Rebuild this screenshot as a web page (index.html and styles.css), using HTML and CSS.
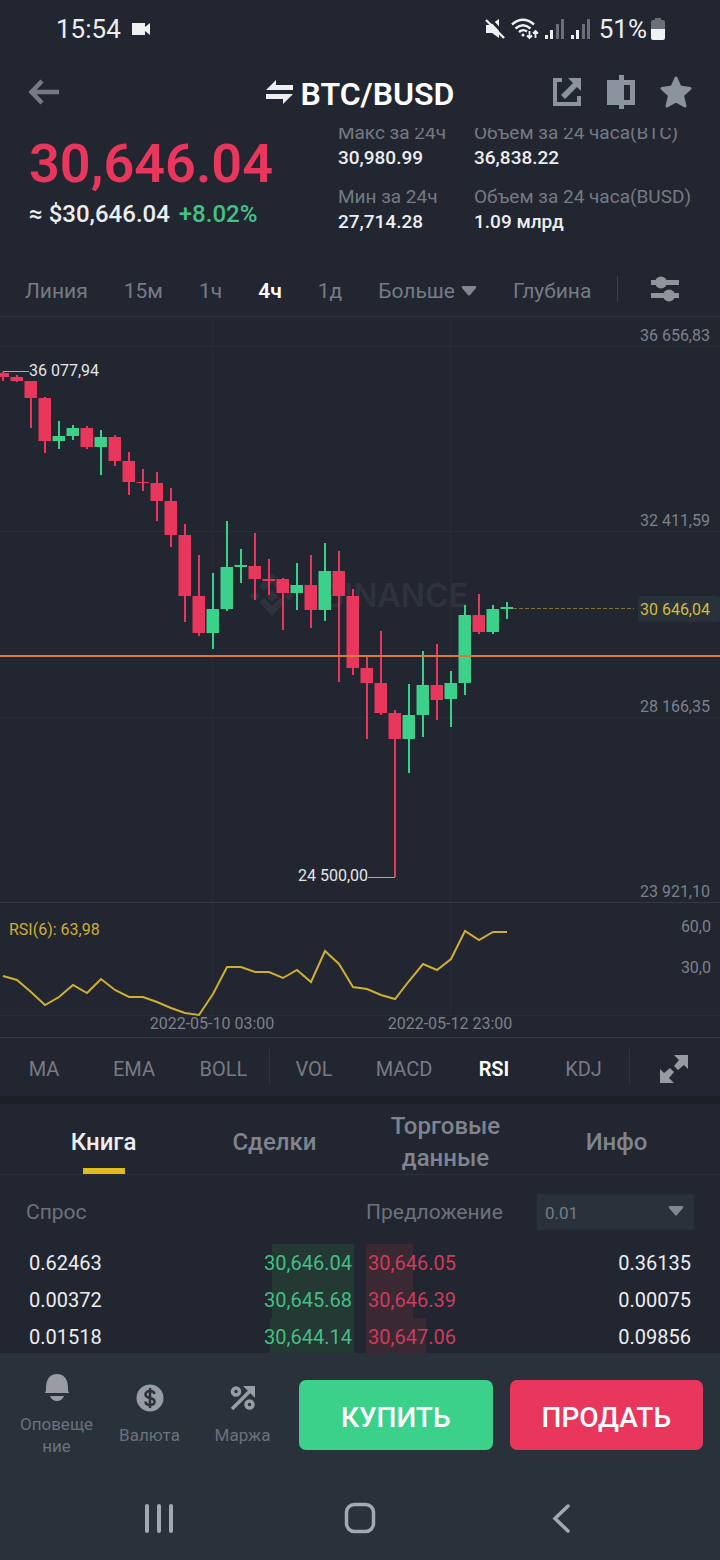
FILE: index.html
```html
<!DOCTYPE html>
<html lang="ru">
<head>
    <meta charset="UTF-8">
    <meta name="viewport" content="width=device-width, initial-scale=1.0">
    <title>BTC/BUSD</title>
    <link rel="stylesheet" href="styles.css">
</head>
<body>
    <div class="screen">
        <div class="status-bar">
            <div class="status-group">
                <span>15:54</span>
                <svg class="status-camera" width="20" height="14" viewBox="0 0 20 14" fill="#eef0f2"><path d="M1 1h13v4l5-4v12l-5-4v4H1z"/></svg>
            </div>
            <div class="status-group">
                <svg width="20" height="22" viewBox="0 0 20 22"><path fill="#eef0f2" d="M1 7h4l9-6v19l-7-5H1z"/><path stroke="#222630" stroke-width="3" d="M4 0l16 17"/><path stroke="#eef0f2" stroke-width="2.4" d="M1 2l18 18"/></svg>
                <svg width="28" height="22" viewBox="0 0 28 22" fill="none" stroke="#eef0f2" stroke-width="2.4"><path d="M1 6.500Q12 -3 23 6.500M4.500 10.500Q12 4 19.500 10.500M8 14Q12 10.500 16 13.500"/><circle cx="12" cy="17" r="1.500" fill="#eef0f2" stroke="none"/><path stroke-width="1.800" d="M18.500 13v7M16 17.500l2.500 2.500 2.500-2.500M24.500 20v-7M22 15.500l2.500-2.500 2.500 2.500"/></svg>
                <svg width="20" height="22" viewBox="0 0 20 22"><path fill="#eef0f2" d="M0 17h3v4H0zM5 12h3v9H5z"/><path fill="#6b6f77" d="M11 6h3v15h-3zM16 1h3v20h-3z"/></svg>
                <svg width="20" height="22" viewBox="0 0 20 22"><path fill="#eef0f2" d="M0 17h3v4H0zM5 12h3v9H5z"/><path fill="#6b6f77" d="M11 6h3v15h-3zM16 1h3v20h-3z"/></svg>
                <span class="battery">51%</span>
                <svg width="16" height="22" viewBox="0 0 16 22"><path fill="#6b6f77" d="M5 0h6v2h2q2 0 2 2v8H1V4q0-2 2-2h2z"/><path fill="#f0f1f4" d="M1 11h14v9q0 2-2 2H3q-2 0-2-2z"/></svg>
            </div>
        </div>

        <header class="header">
            <button class="icon-button" aria-label="Назад">
                <svg width="32" height="26" viewBox="0 0 32 26" fill="none" stroke="#757a85" stroke-width="4.500"><path d="M14 2L3.500 13 14 24M4 13h27"/></svg>
            </button>
            <h1 class="pair">
                <svg width="28" height="26" viewBox="0 0 28 26" fill="#eceef2"><path d="M0 11L10 1v5h17v5zM27 15L17 25v-5H0v-5z"/></svg>
                <span>BTC/BUSD</span>
            </h1>
            <div class="header-actions">
                <button class="icon-button" aria-label="Поделиться">
                    <svg width="30" height="30" viewBox="0 0 30 30"><path fill="none" stroke="#8a939e" stroke-width="4" d="M10 3H3v24h24v-8"/><path fill="#8a939e" d="M16 1h13v13l-4-4-12 12-4-4L21 6z"/></svg>
                </button>
                <button class="icon-button" aria-label="Сравнить">
                    <svg width="30" height="34" viewBox="0 0 30 34"><path fill="#8a939e" fill-rule="evenodd" d="M1 5h12V0h5v5h11v25H18v4h-5v-4H1zM18 10v15h6V10z"/></svg>
                </button>
                <button class="icon-button" aria-label="В избранное">
                    <svg width="32" height="32" viewBox="0 0 32 32"><path fill="#8a939e" stroke="#8a939e" stroke-width="3" stroke-linejoin="round" d="M16 2l4 9 10 1.500-7.500 7L25 30l-9-5-9 5 2.500-10.500L2 12.500 12 11z"/></svg>
                </button>
            </div>
        </header>

        <main class="content">
            <section class="summary">
                <div class="price-block">
                    <div class="price">30,646.04</div>
                    <div class="price-usd">≈ $30,646.04 <span class="up">+8.02%</span></div>
                </div>
                <dl class="stats">
                    <div><dt>Макс за 24ч</dt><dd>30,980.99</dd></div>
                    <div><dt>Объем за 24 часа(BTC)</dt><dd>36,838.22</dd></div>
                    <div><dt>Мин за 24ч</dt><dd>27,714.28</dd></div>
                    <div><dt>Объем за 24 часа(BUSD)</dt><dd>1.09 млрд</dd></div>
                </dl>
            </section>

            <nav class="intervals">
                <button>Линия</button>
                <button>15м</button>
                <button>1ч</button>
                <button class="active">4ч</button>
                <button>1д</button>
                <button class="more">Больше <svg width="16" height="10" viewBox="0 0 16 10"><path fill="#81868f" d="M2 0h12q2 0 1 2L9 9q-1 1-2 0L1 2q-1-2 1-2z"/></svg></button>
                <button>Глубина</button>
                <button class="settings" aria-label="Настройки">
                    <svg width="28" height="26" viewBox="0 0 28 26" fill="#8f949d"><path d="M0 4h28v5H0zM0 17h28v5H0z"/><circle cx="10" cy="6.500" r="6"/><circle cx="18" cy="19.500" r="6"/></svg>
                </button>
            </nav>

            <svg class="chart" id="chart" viewBox="0 0 720 720">
                <path class="grid" d="M0 29.500h720M0 214.500h720M0 400.500h720M0 698.500h720M212.500 0v698M450.500 0v698"/>
                <path class="border" d="M0 585.500h720"/>
                <g class="watermark">
                    <path d="M272 256l13 13-5 5-8-8-8 8-5-5zM272 273l6 6-6 6-6-6zM255 274l5 5-5 5-5-5zM289 274l5 5-5 5-5-5zM259 285l5-4 8 8 8-8 5 4-13 14z"/>
                    <text x="468" y="290">BINANCE</text>
                </g>
                <g id="candles"></g>
                <path class="level" d="M0 339h720"/>
                <path class="last-line" d="M513 291.500h121"/>
                <path class="marker" d="M3 54.500h26M368 560.500h27"/>
                <text class="marker-text" x="29" y="59">36 077,94</text>
                <text class="marker-text" x="298" y="564">24 500,00</text>
                <g class="axis">
                    <text x="710" y="24">36 656,83</text>
                    <text x="710" y="209">32 411,59</text>
                    <text x="710" y="395">28 166,35</text>
                    <text x="710" y="580">23 921,10</text>
                    <text x="711" y="615">60,0</text>
                    <text x="711" y="656">30,0</text>
                </g>
                <rect class="last-tag" x="638" y="279" width="82" height="26" rx="3"/>
                <text class="last-price" x="710" y="298">30 646,04</text>
                <polyline id="rsi" class="rsi-line"/>
                <text class="rsi-text" x="9" y="618">RSI(6): 63,98</text>
                <g class="dates">
                    <text x="212" y="712">2022-05-10 03:00</text>
                    <text x="450" y="712">2022-05-12 23:00</text>
                </g>
            </svg>

            <nav class="indicators">
                <button>MA</button>
                <button>EMA</button>
                <button class="divided">BOLL</button>
                <button>VOL</button>
                <button>MACD</button>
                <button class="active">RSI</button>
                <button class="divided">KDJ</button>
                <button aria-label="На весь экран">
                    <svg width="28" height="28" viewBox="0 0 28 28" fill="#969ba3"><path d="M14 0h14v14l-4-4-6 5-4-4 5-6zM14 28H0V14l4 4 6-5 4 4-5 6z"/></svg>
                </button>
            </nav>

            <nav class="tabs">
                <button class="active">Книга</button>
                <button>Сделки</button>
                <button>Торговые данные</button>
                <button>Инфо</button>
            </nav>

            <section class="book">
                <table>
                    <thead>
                        <tr>
                            <th colspan="2">Спрос</th>
                            <th class="ask-head">Предложение</th>
                            <th>
                                <div class="step">
                                    <select aria-label="Шаг цены"><option>0.01</option></select>
                                    <svg width="16" height="12" viewBox="0 0 16 12"><path fill="#81868f" d="M2 1h12q2 0 1 2L9 10q-1 1-2 0L1 3q-1-2 1-2z"/></svg>
                                </div>
                            </th>
                        </tr>
                    </thead>
                    <tbody>
                        <tr>
                            <td class="amount">0.62463</td>
                            <td class="bid"><div style="--depth: 51%">30,646.04</div></td>
                            <td class="ask"><div style="--depth: 29%">30,646.05</div></td>
                            <td class="amount right">0.36135</td>
                        </tr>
                        <tr>
                            <td class="amount">0.00372</td>
                            <td class="bid"><div style="--depth: 51%">30,645.68</div></td>
                            <td class="ask"><div style="--depth: 29%">30,646.39</div></td>
                            <td class="amount right">0.00075</td>
                        </tr>
                        <tr>
                            <td class="amount">0.01518</td>
                            <td class="bid"><div style="--depth: 52%">30,644.14</div></td>
                            <td class="ask"><div style="--depth: 37%">30,647.06</div></td>
                            <td class="amount right">0.09856</td>
                        </tr>
                    </tbody>
                </table>
            </section>
        </main>

        <footer class="footer">
            <div class="actions">
                <button class="tool">
                    <svg width="28" height="28" viewBox="0 0 28 28" fill="#979ca5"><path d="M3 15C3 5 8 1 14 1s11 4 11 14v3q1 1 1 2H2q0-1 1-2zM7 23h14q-2 5-7 5t-7-5z"/></svg>
                    <span>Оповеще<br>ние</span>
                </button>
                <button class="tool">
                    <svg width="28" height="28" viewBox="0 0 28 28"><circle cx="14" cy="14" r="13.500" fill="#979ca5"/><path fill="none" stroke="#29313a" stroke-width="2.500" d="M14 4v20M18.500 10Q18 7 14 7t-4.500 3.500Q9.500 13 14 14t4.500 3.500Q18.500 21 14 21t-4.500-3.500"/></svg>
                    <span>Валюта</span>
                </button>
                <button class="tool">
                    <svg width="28" height="28" viewBox="0 0 28 28" fill="none" stroke="#979ca5" stroke-width="3.500"><circle cx="7" cy="7.500" r="3.500"/><circle cx="20.500" cy="20.500" r="3.500"/><path d="M3 25L22 6"/><path fill="#979ca5" stroke="none" d="M14 2h12v12z"/></svg>
                    <span>Маржа</span>
                </button>
                <button class="trade buy">КУПИТЬ</button>
                <button class="trade sell">ПРОДАТЬ</button>
            </div>
            <nav class="system-nav">
                <button aria-label="Недавние"><svg width="30" height="30" viewBox="0 0 30 30" stroke="#a3a9b3" stroke-width="4" stroke-linecap="round"><path d="M3 3v25M15 3v25M27 3v25"/></svg></button>
                <button aria-label="Домой"><svg width="32" height="32" viewBox="0 0 32 32"><rect x="2.500" y="2.500" width="27" height="27" rx="8" fill="none" stroke="#a3a9b3" stroke-width="3.500"/></svg></button>
                <button aria-label="Назад"><svg width="20" height="30" viewBox="0 0 20 30" fill="none" stroke="#a3a9b3" stroke-width="3.500" stroke-linecap="round"><path d="M17 3L4 15.500 17 28"/></svg></button>
            </nav>
        </footer>
    </div>

    <script src="chart.js"></script>
</body>
</html>
```

FILE: styles.css
```css
* {
    box-sizing: border-box;
}

body {
    margin: 0;
    background-color: #222630;
    color: #eceef2;
    font-family: Roboto, "Noto Sans", sans-serif;
    font-size: 20px;
}

button {
    padding: 0;
    border: none;
    background: none;
    color: #767b85;
    font-family: inherit;
    font-size: 20px;
    cursor: pointer;
}

svg {
    display: block;
    flex-shrink: 0;
}

.screen {
    display: flex;
    flex-direction: column;
    height: 100vh;
}

/* status bar */
.status-bar {
    display: flex;
    justify-content: space-between;
    align-items: center;
    height: 56px;
    padding: 2px 54px 0 56px;
    font-size: 26px;
}

.status-group {
    display: flex;
    align-items: center;
    gap: 6px;
}

.status-camera {
    margin-left: 4px;
}

.battery {
    margin: 0 -3px 0 2px;
}

/* header */
.header {
    display: grid;
    grid-template-columns: 1fr auto 1fr;
    align-items: center;
    height: 72px;
    padding: 0 28px;
}

.icon-button {
    justify-self: start;
}

.pair {
    display: flex;
    align-items: center;
    gap: 7px;
    margin: 0;
    color: #fff;
    font-size: 32px;
    font-weight: 600;
    line-height: 40px;
}

.pair span {
    padding-top: 4px;
}

.header-actions {
    display: flex;
    justify-content: flex-end;
    align-items: center;
    gap: 24px;
}

.content {
    flex: 1;
    min-height: 0;
    overflow-y: auto;
    scrollbar-width: none;
}

/* price and 24h stats */
.summary {
    display: flex;
    justify-content: space-between;
    height: 134px;
    padding: 0 29px;
    overflow: hidden;
}

.price {
    margin-top: 4px;
    color: #e8365d;
    font-size: 54px;
    font-weight: 600;
    line-height: 64px;
}

.price-usd {
    font-size: 24px;
    font-weight: 500;
    line-height: 36px;
}

.up {
    margin-left: 3px;
    color: #41c287;
}

.stats {
    display: grid;
    grid-template-columns: auto auto;
    align-content: start;
    gap: 14px 28px;
    margin: -7px 0 0;
}

.stats dt {
    color: #747a84;
    font-size: 19px;
    line-height: 24px;
}

.stats dd {
    margin: 0;
    font-size: 19px;
    font-weight: 500;
    line-height: 26px;
}

/* chart intervals */
.intervals {
    display: flex;
    align-items: center;
    gap: 36px;
    height: 55px;
    padding: 0 25px;
    border-bottom: 1px solid #2f343e;
}

.intervals button {
    padding-top: 3px;
    font-size: 21px;
}

.intervals .more {
    display: flex;
    align-items: center;
    gap: 6px;
}

.intervals .active,
.indicators .active {
    color: #fff;
    font-weight: 600;
}

.intervals .settings {
    margin-left: -10px;
    padding: 0 0 0 33px;
    border-left: 1px solid #3a3f49;
}

/* chart */
.chart {
    width: 100%;
    height: auto;
    font-size: 16px;
}

.grid {
    stroke: #272c36;
}

.border {
    stroke: #343943;
}

.watermark {
    fill: #2d323c;
    font-family: Inter, sans-serif;
    font-size: 32px;
    font-weight: 600;
    text-anchor: end;
}

.wick {
    stroke-width: 2;
}

.candle-up {
    fill: #3bd18a;
    stroke: #3bd18a;
}

.candle-down {
    fill: #e8365d;
    stroke: #e8365d;
}

.body {
    stroke: none;
}

.level {
    stroke: #d87a3e;
    stroke-width: 2;
}

.last-line {
    stroke: #80723b;
    stroke-dasharray: 4 2;
}

.marker {
    stroke: #a5a9b0;
}

.marker-text {
    fill: #e3e5e9;
}

.axis {
    fill: #7c818a;
    text-anchor: end;
}

.last-tag {
    fill: #29323b;
}

.last-price {
    fill: #d6ba3c;
    text-anchor: end;
}

.rsi-line {
    fill: none;
    stroke: #cfae34;
    stroke-width: 2;
}

.rsi-text {
    fill: #cfae34;
}

.dates {
    fill: #7c818a;
    text-anchor: middle;
}

/* indicators */
.indicators {
    display: grid;
    grid-template-columns: repeat(8, 1fr);
    align-items: center;
    height: 67px;
    border-top: 1px solid #343943;
    border-bottom: 8px solid #1c2026;
}

.indicators button {
    display: flex;
    justify-content: center;
    align-items: center;
    height: 36px;
    padding: 3px 2px 0 0;
}

.indicators .divided {
    border-right: 1px solid #2f343e;
}

/* tabs */
.tabs {
    display: grid;
    grid-template-columns: repeat(4, 1fr);
    height: 71px;
    padding: 0 18px;
    border-bottom: 1px solid #2b3039;
}

.tabs button {
    position: relative;
    padding: 5px 20px 0;
    color: #7f848e;
    font-size: 24px;
    font-weight: 500;
    line-height: 32px;
}

.tabs .active {
    color: #eceef2;
}

.tabs .active::after {
    content: "";
    position: absolute;
    left: 50%;
    bottom: 0;
    width: 42px;
    height: 6px;
    margin-left: -21px;
    background-color: #dfbc20;
}

/* order book */
.book {
    padding: 5px 26px 0;
}

.book table {
    width: 100%;
    table-layout: fixed;
    border-collapse: collapse;
}

.book th {
    height: 64px;
    padding: 0;
    color: #6c727c;
    font-size: 21px;
    font-weight: 400;
    text-align: left;
}

.book .ask-head {
    padding-left: 6px;
}

.step {
    position: relative;
    margin-left: 10px;
}

.step select {
    display: block;
    width: 100%;
    height: 36px;
    padding: 2px 8px 0;
    border: none;
    border-radius: 3px;
    background-color: #29323b;
    color: #767b85;
    font-family: inherit;
    font-size: 17px;
    appearance: none;
}

.step svg {
    position: absolute;
    top: 11px;
    right: 10px;
    pointer-events: none;
}

.book td {
    height: 37px;
    padding: 0;
    line-height: 37px;
}

.book .amount {
    padding: 2px 3px 0;
    line-height: 35px;
}

.book .right {
    text-align: right;
}

.book .bid {
    padding-right: 6px;
    color: #44be86;
    text-align: right;
}

.book .ask {
    padding-left: 6px;
    color: #cd3b5d;
}

.book td div {
    padding: 2px 2px 0;
    line-height: 35px;
}

.book .bid div {
    background: linear-gradient(to left, #243834 var(--depth), transparent var(--depth));
}

.book .ask div {
    background: linear-gradient(to right, #3a2833 var(--depth), transparent var(--depth));
}

/* bottom bar */
.footer {
    background-color: #29313a;
}

.actions {
    display: flex;
    align-items: center;
    height: 123px;
    padding: 0 17px 0 10px;
}

.tool {
    display: flex;
    flex-direction: column;
    align-items: center;
    gap: 12px;
    width: 93px;
    color: #6a727c;
    font-size: 17px;
    line-height: 22px;
}

.trade {
    flex: 1;
    height: 70px;
    margin-left: 17px;
    padding-top: 5px;
    border-radius: 7px;
    color: #fff;
    font-size: 28px;
    font-weight: 500;
}

.buy {
    margin-left: 10px;
    background-color: #3bd18a;
}

.sell {
    background-color: #e8365d;
}

.system-nav {
    display: grid;
    grid-template-columns: repeat(3, 1fr);
    height: 84px;
    padding: 0 58px;
}

.system-nav button {
    display: flex;
    justify-content: center;
    align-items: center;
}
```

FILE: chart.js
```js
// [direction, high, body top, body bottom, low]
const candles = [
    ['down', 55, 56, 60, 64],
    ['down', 58, 60, 64, 65],
    ['down', 64, 64, 81, 111],
    ['down', 80, 81, 124, 136],
    ['up', 104, 119, 124, 132],
    ['up', 108, 111, 119, 123],
    ['down', 109, 111, 130, 132],
    ['up', 113, 120, 130, 158],
    ['down', 118, 120, 144, 149],
    ['down', 135, 144, 165, 178],
    ['down', 152, 165, 166, 174],
    ['down', 155, 166, 184, 204],
    ['down', 171, 184, 218, 230],
    ['down', 207, 218, 279, 305],
    ['down', 238, 279, 316, 319],
    ['up', 256, 292, 316, 332],
    ['up', 204, 250, 292, 294],
    ['up', 232, 248, 250, 266],
    ['down', 216, 249, 262, 283],
    ['down', 242, 262, 264, 278],
    ['down', 261, 262, 276, 313],
    ['up', 246, 268, 276, 293],
    ['down', 238, 268, 293, 311],
    ['up', 226, 254, 293, 304],
    ['down', 234, 254, 279, 365],
    ['down', 272, 279, 351, 358],
    ['down', 339, 351, 366, 422],
    ['down', 314, 366, 396, 398],
    ['down', 393, 396, 422, 560],
    ['up', 367, 398, 422, 456],
    ['up', 334, 368, 398, 420],
    ['down', 327, 368, 383, 403],
    ['up', 354, 366, 382, 410],
    ['up', 288, 298, 366, 378],
    ['down', 277, 298, 315, 317],
    ['up', 288, 292, 315, 317],
    ['up', 285, 290, 292, 302]
];

const rsi = [659, 663, 675, 688, 680, 668, 676, 662, 673, 680, 680, 685, 691, 696, 698, 677, 650, 650, 655,
    655, 661, 653, 665, 634, 647, 670, 672, 678, 682, 664, 647, 653, 642, 614, 623, 615, 615];

const step = 14;
const start = 3;

document.getElementById('candles').innerHTML = candles.map(([dir, high, top, bottom, low], i) => {
    const x = start + i * step;
    return `<g class="candle-${dir}">
        <path class="wick" d="M${x} ${high}V${low}"/>
        <rect class="body" x="${x - 6.5}" y="${top}" width="12.5" height="${bottom - top}"/>
    </g>`;
}).join('');

document.getElementById('rsi').setAttribute('points', rsi.map((y, i) => `${start + i * step},${y}`).join(' '));
```
